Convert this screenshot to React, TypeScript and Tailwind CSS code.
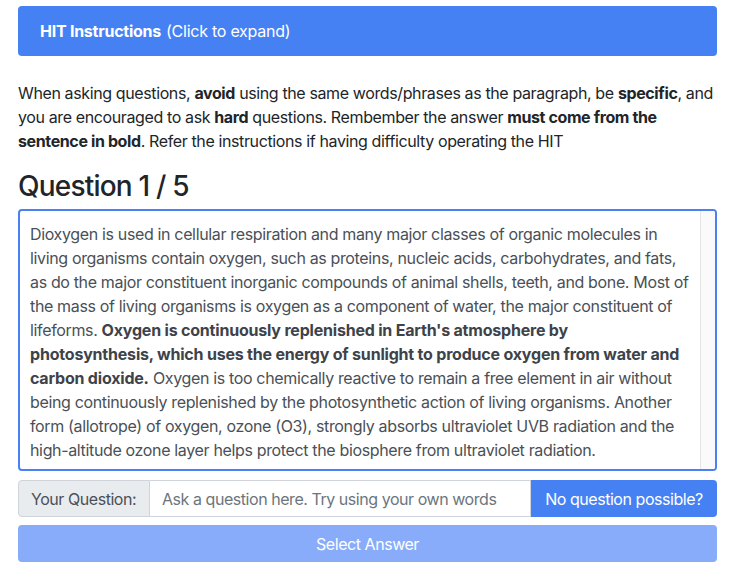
import React from 'react';

export default function App() {
  return (
    <div
      className="min-h-screen bg-white px-[18px] pt-[6px] text-[16px] leading-[24px] tracking-[-0.38px] text-[#212529]"
      style={{ fontFamily: 'Inter, "Noto Sans", sans-serif' }}
    >
      {/* Instructions toggle */}
      <button className="flex h-[50px] w-full items-center rounded-[4px] bg-[#4681f4] px-[22px] text-left tracking-[-0.25px] text-white">
        <span className="font-bold">HIT Instructions</span>
        <span className="ml-[5px]">(Click to expand)</span>
      </button>

      <p className="mt-[25px]">
        When asking questions, <b>avoid</b> using the same words/phrases as the paragraph, be{' '}
        <b>specific</b>, and you are encouraged to ask <b>hard</b> questions. Rembember the answer{' '}
        <b>must come from the sentence in bold</b>. Refer the instructions if having difficulty
        operating the HIT
      </p>

      <h3 className="mt-[16px] text-[28px] leading-[34px] font-medium tracking-[-0.8px]">Question 1 / 5</h3>

      {/* Paragraph box */}
      <div className="mt-[6px] flex h-[262px] overflow-hidden rounded-[4px] border-2 border-[#4a80f5] bg-white">
        <div className="flex-1 pt-[11px] pr-[6px] pl-[10px] tracking-[-0.35px] text-[#495057]">
          Dioxygen is used in cellular respiration and many major classes of organic molecules in
          living organisms contain oxygen, such as proteins, nucleic acids, carbohydrates, and fats,
          as do the major constituent inorganic compounds of animal shells, teeth, and bone. Most of
          the mass of living organisms is oxygen as a component of water, the major constituent of
          lifeforms.{' '}
          <b className="tracking-[-0.2px] text-[#3d4349]">
            Oxygen is continuously replenished in Earth's atmosphere by photosynthesis, which uses
            the energy of sunlight to produce oxygen from water and carbon dioxide.
          </b>{' '}
          Oxygen is too chemically reactive to remain a free element in air without being
          continuously replenished by the photosynthetic action of living organisms. Another form
          (allotrope) of oxygen, ozone (O3), strongly absorbs ultraviolet UVB radiation and the
          high-altitude ozone layer helps protect the biosphere from ultraviolet radiation.
        </div>
        <div className="w-[15px] shrink-0 border-l border-[#e6e6e6] bg-[#fafafa]" />
      </div>

      {/* Question input group */}
      <div className="mt-[9px] flex h-[37px] tracking-[-0.45px]">
        <div className="flex w-[132px] shrink-0 items-center rounded-l-[4px] border border-[#ced4da] bg-[#e9ecef] px-[12px] text-[#495057]">
          Your Question:
        </div>
        <input
          className="min-w-0 flex-1 border-y border-r border-[#ced4da] px-[12px] text-[#495057] outline-none placeholder:text-[#6c757d]"
          placeholder="Ask a question here. Try using your own words"
        />
        <button className="w-[186px] shrink-0 rounded-r-[4px] bg-[#4681f4] px-[10px] text-white">
          No question possible?
        </button>
      </div>

      <button
        disabled
        className="mt-[8px] h-[37px] w-full rounded-[4px] bg-[#88acfa] tracking-[-0.45px] text-white"
      >
        Select Answer
      </button>
    </div>
  );
}
